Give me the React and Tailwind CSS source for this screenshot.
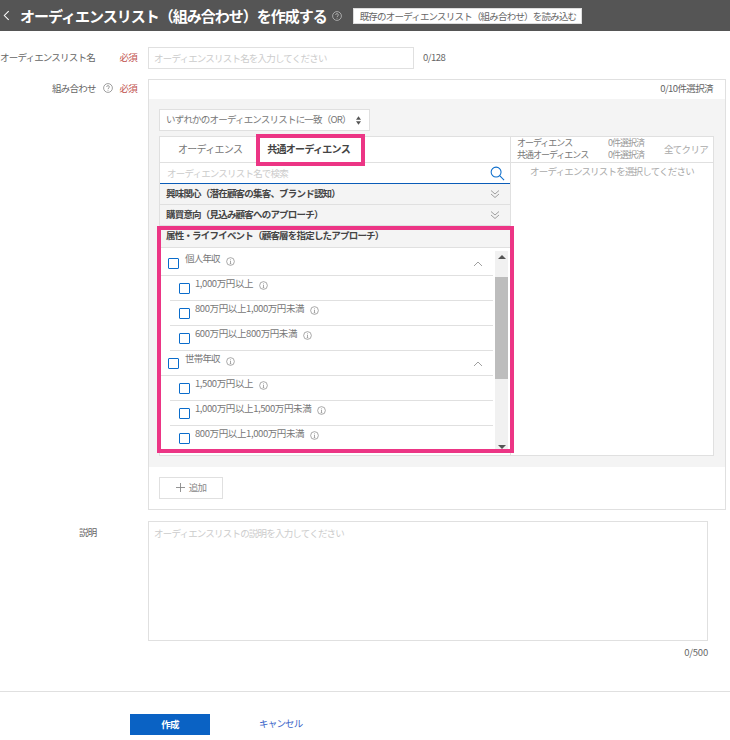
function Info() {
  return (
    <svg viewBox="0 0 10 10" className="h-[9px] w-[9px] shrink-0" fill="none" stroke="#888" strokeWidth="0.8">
      <circle cx="5" cy="5" r="4.3" />
      <path d="M5 4.4V7.4M4.2 7.4H5.8M4.4 4.4H5" />
      <path d="M5 2.5V3.2" />
    </svg>
  );
}
function Help({ c = "#777" }) {
  return (
    <svg viewBox="0 0 10 10" className="h-[10px] w-[10px] shrink-0" fill="none" stroke={c} strokeWidth="0.7">
      <circle cx="5" cy="5" r="4.4" />
      <path d="M3.6 3.9C3.6 2.2 6.4 2.2 6.4 3.9C6.4 5 5 5 5 6.2M5 7V7.7" />
    </svg>
  );
}
function Box() {
  return <span className="block h-[11px] w-[11px] shrink-0 rounded-[1px] border border-[#0a6ccb] bg-white" />;
}
function Chev() {
  return (
    <svg viewBox="0 0 10 10" className="h-[10px] w-[10px]" fill="none" stroke="#888" strokeWidth="0.8">
      <path d="M1 7L5 3L9 7" />
    </svg>
  );
}
function Dbl() {
  return (
    <svg viewBox="0 0 10 10" className="h-[10px] w-[10px]" fill="none" stroke="#888" strokeWidth="0.8">
      <path d="M1 1.5L5 5L9 1.5M1 5L5 8.5L9 5" />
    </svg>
  );
}
function Group({ label }) {
  return (
    <div className="flex h-[25px] items-start border-b border-[#e0e0e0] pl-[8px] pr-[10px]">
      <span className="mt-[7px]"><Box /></span>
      <span className="ml-[6px] leading-[14px] text-[#777]">{label}</span>
      <span className="ml-[6px] mt-[6px]"><Info /></span>
      <span className="ml-auto mt-[8px]"><Chev /></span>
    </div>
  );
}
function Item({ label, last }) {
  return (
    <div className={"ml-[10px] flex h-[25px] items-start pl-[9px] tracking-[-0.4px] " + (last ? "" : "border-b border-[#e0e0e0]")}>
      <span className="mt-[7px]"><Box /></span>
      <span className="ml-[5px] leading-[14px] text-[#777]">{label}</span>
      <span className="ml-[6px] mt-[5px]"><Info /></span>
    </div>
  );
}
function Acc({ label, dbl, h }) {
  return (
    <div className={"flex items-center justify-between border-b border-[#e0e0e0] bg-[#f4f4f4] pl-[6px] pr-[10px] font-bold text-[#444] " + h}>
      <span className="-mt-[2px]">{label}</span>
      {dbl && <Dbl />}
    </div>
  );
}
export default function App() {
  return (
    <div className="relative h-[740px] w-[730px] overflow-hidden bg-white text-[9.5px] tracking-[-0.8px] text-[#555] [font-family:'Noto_Sans_CJK_JP','Noto_Sans',sans-serif]">
      <header className="flex h-[31px] items-center bg-[#555555] pl-[3px]">
        <svg viewBox="0 0 8 12" className="h-[11px] w-[7px]" fill="none" stroke="#fff" strokeWidth="1.2"><path d="M6.5 1L1.5 6L6.5 11" /></svg>
        <h1 className="ml-[10px] whitespace-nowrap text-[15px] font-bold leading-none tracking-[-1px] text-white">オーディエンスリスト（組み合わせ）を作成する</h1>
        <span className="ml-[5px]"><Help c="#ccc" /></span>
        <button className="ml-[11px] h-[16px] w-[229px] whitespace-nowrap border border-[#ddd] bg-white pl-[6px] text-left leading-[14px] text-[#666]">既存のオーディエンスリスト（組み合わせ）を読み込む</button>
      </header>

      <div className="mt-[16px] flex items-center">
        <div className="flex w-[148px] items-center pb-[2px] pr-[11px]">
          <span className="text-[#666]">オーディエンスリスト名</span>
          <span className="ml-auto text-[#c0504d]">必須</span>
        </div>
        <div className="flex h-[22px] w-[266px] items-center border border-[#e0e0e0] pl-[5px] text-[#ccc]">オーディエンスリスト名を入力してください</div>
        <span className="mb-[2px] ml-[9px] tracking-[-0.5px] text-[#666]">0/128</span>
      </div>

      <div className="mt-[10px] flex items-start">
        <div className="flex w-[148px] items-center justify-end gap-[7px] pr-[11px] pt-[2px]">
          <span className="text-[#666]">組み合わせ</span>
          <Help />
          <span className="text-[#c0504d]">必須</span>
        </div>
        <div className="h-[431px] w-[578px] border border-[#e0e0e0]">
          <div className="flex h-[19px] items-center justify-end pb-[2px] pr-[12px] tracking-[-0.6px] text-[#666]">0/10件選択済</div>
          <div className="h-[368px] bg-[#f4f4f4] px-[10px] pt-[10px]">
            <div className="flex h-[22px] w-[211px] items-center justify-between border border-[#e0e0e0] bg-white pb-[2px] pl-[6px] pr-[8px] text-[#777]">
              <span>いずれかのオーディエンスリストに一致（OR）</span>
              <svg viewBox="0 0 6 10" className="mt-[2px] h-[9px] w-[5px]" fill="#555"><path d="M3 0L6 4H0ZM3 10L0 6H6Z" /></svg>
            </div>
            <div className="mt-[5px] flex h-[320px] w-[555px] border border-[#e0e0e0] bg-white">
              <div className="w-[351px] shrink-0 border-r border-[#e0e0e0]">
                <div className="flex h-[26px] items-center border-b border-[#e0e0e0] pb-[2px] text-[10px] tracking-[-0.7px]">
                  <span className="ml-[18px] text-[#777]">オーディエンス</span>
                  <span className="ml-[25px] font-bold text-[#444]">共通オーディエンス</span>
                </div>
                <div className="flex h-[21px] items-center justify-between border-b border-[#0a5cb8] pl-[7px] pr-[5px] text-[#ccc]">
                  <span>オーディエンスリスト名で検索</span>
                  <svg viewBox="0 0 16 16" className="h-[15px] w-[15px]" fill="none" stroke="#0a6ccb" strokeWidth="1.1"><circle cx="6.5" cy="6.5" r="5.3" /><path d="M10.3 10.3L15 15" /></svg>
                </div>
                <Acc label="興味関心（潜在顧客の集客、ブランド認知）" dbl h="h-[21px]" />
                <Acc label="購買意向（見込み顧客へのアプローチ）" dbl h="h-[21px]" />
                <Acc label="属性・ライフイベント（顧客層を指定したアプローチ）" h="h-[22px]" />
                <div className="mt-[3px] flex h-[200px] pr-[2px]">
                  <div className="flex-1 overflow-hidden">
                    <Group label="個人年収" />
                    <Item label="1,000万円以上" />
                    <Item label="800万円以上1,000万円未満" />
                    <Item label="600万円以上800万円未満" />
                    <Group label="世帯年収" />
                    <Item label="1,500万円以上" />
                    <Item label="1,000万円以上1,500万円未満" />
                    <Item label="800万円以上1,000万円未満" last />
                  </div>
                  <div className="ml-[2px] flex w-[13px] flex-col items-center bg-[#f1f1f1]">
                    <span className="mt-[4px] h-0 w-0 border-x-[4px] border-b-[4px] border-x-transparent border-b-[#555]" />
                    <span className="mt-[18px] h-[102px] w-full bg-[#bdbdbd]" />
                    <span className="mb-[2px] mt-auto h-0 w-0 border-x-[4px] border-t-[4px] border-x-transparent border-t-[#555]" />
                  </div>
                </div>
              </div>
              <div className="flex-1">
                <div className="flex h-[26px] items-center border-b border-[#e0e0e0] pb-[2px] pl-[6px] pr-[5px] text-[9px] leading-[12px] tracking-[-1px] text-[#777]">
                  <div className="grid grid-cols-[91px_auto]">
                    <span>オーディエンス</span><span className="text-[#999]">0件選択済</span>
                    <span>共通オーディエンス</span><span className="text-[#999]">0件選択済</span>
                  </div>
                  <span className="ml-auto text-[9.5px] tracking-[-0.7px] text-[#aaa]">全てクリア</span>
                </div>
                <div className="pt-[1px] text-center text-[#aaa]">オーディエンスリストを選択してください</div>
              </div>
            </div>
          </div>
          <div className="px-[10px] pt-[10px]">
            <button className="flex h-[22px] w-[64px] items-center justify-center gap-[4px] border border-[#e0e0e0] bg-white pb-[1px] text-[#888]">
              <svg viewBox="0 0 10 10" className="h-[9px] w-[9px]" stroke="#888" strokeWidth="1"><path d="M5 0V10M0 5H10" /></svg>
              追加
            </button>
          </div>
        </div>
      </div>

      <div className="mt-[11px] flex items-start">
        <div className="w-[148px] pl-[79px] pt-[4px] text-[#666]">説明</div>
        <div className="h-[120px] w-[560px] border border-[#e0e0e0] pl-[5px] pt-[4px] text-[#ccc]">オーディエンスリストの説明を入力してください</div>
      </div>
      <div className="mt-[4px] w-[708px] text-right tracking-[-0.2px] text-[#666]">0/500</div>

      <div className="mt-[32px] flex h-[44px] items-end border-t border-[#e0e0e0] pl-[130px]">
        <button className="h-[21px] w-[80px] bg-[#0a62c4] pb-[2px] font-bold text-white">作成</button>
        <span className="mb-[5px] ml-[49px] text-[#3a64c8]">キャンセル</span>
      </div>

      <div className="absolute left-[256px] top-[134px] h-[32px] w-[109px] border-[4px] border-[#ec3585]" />
      <div className="absolute left-[157px] top-[226px] h-[227px] w-[357px] border-[4px] border-[#ec3585]" />
    </div>
  );
}
